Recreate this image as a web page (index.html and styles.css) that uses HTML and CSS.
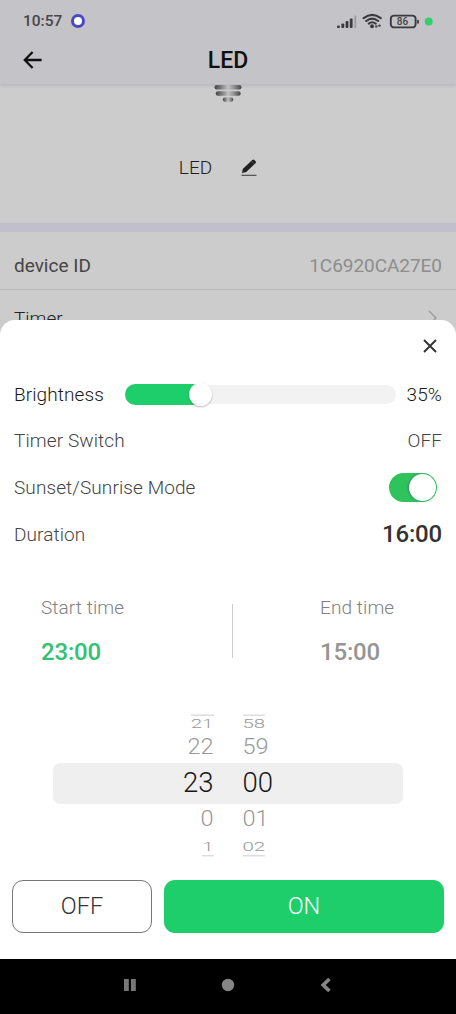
FILE: index.html
```html
<!DOCTYPE html>
<html lang="en">
<head>
<meta charset="utf-8">
<title>LED</title>
<link rel="stylesheet" href="styles.css">
</head>
<body>
<div class="phone">
  <div class="screen">
    <header class="top">
      <div class="status">
        <span class="clock">10:57</span>
        <span class="ring"></span>
        <svg class="indicators" width="98" height="20" viewBox="0 0 98 20">
          <g fill="#3b3b3f">
            <rect x="1" y="14.5" width="2.8" height="2.5" rx=".8"/><rect x="5.4" y="12.5" width="2.8" height="4.5" rx=".8"/><rect x="9.6" y="10" width="2.8" height="7" rx=".8"/><rect x="13.8" y="7.5" width="2.8" height="9.5" rx=".8"/>
            <rect x="18.4" y="4.5" width="1.8" height="12.5" fill="#9b9b9f"/>
            <circle cx="36" cy="15.3" r="2"/><circle cx="40.3" cy="15.4" r="1.2"/><circle cx="43.5" cy="14.6" r="1.2"/>
          </g>
          <g fill="none" stroke="#3b3b3f" stroke-width="2.1" stroke-linecap="round">
            <path d="M27.6 7.2Q36.2.5 44.8 7.2M30.2 10Q36.2 5.4 42.2 10M32.7 12.6Q36.2 9.9 39.7 12.6"/>
            <rect x="54.8" y="4.6" width="24.8" height="11.8" rx="3.2" stroke-width="1.9"/>
          </g>
          <rect x="81" y="8.7" width="2" height="4" rx="1" fill="#5b3b40"/>
          <text x="60.8" y="14.2" class="battery">86</text>
          <circle cx="92.7" cy="10.5" r="4" fill="#2fd06c"/>
        </svg>
      </div>
      <div class="titlebar">
        <svg class="back" width="20" height="20" viewBox="0 0 20 20"><path d="M18.6 10H2M9.6 2L1.8 10l7.8 8" fill="none" stroke="#111" stroke-width="2.3"/></svg>
        <h1>LED</h1>
      </div>
    </header>
    <section class="device">
      <svg class="bulb" width="28" height="18" viewBox="0 0 28 18">
        <defs><linearGradient id="metal"><stop offset="0" stop-color="#454545"/><stop offset=".22" stop-color="#777"/><stop offset=".5" stop-color="#c2c2c2"/><stop offset=".75" stop-color="#8a8a8a"/><stop offset="1" stop-color="#444"/></linearGradient></defs>
        <g fill="url(#metal)"><rect x=".5" y="0" width="27" height="4.6" rx="2.3"/><rect x="1.7" y="6.2" width="25" height="4.6" rx="2.3"/><rect x="8.8" y="12.4" width="10.5" height="4.4" rx="2.2"/></g>
      </svg>
      <div class="name"><span>LED</span>
        <svg width="16" height="18" viewBox="0 0 16 18"><path d="M1 14l.8-4L11.2 1q1-1 2.1 0l1.3 1.3q.8 1-.1 2L5.2 12.9z" fill="#202020"/><path d="M10.1 1.7l3.7 3.8" stroke="#888" stroke-width=".5"/><path d="M.5 16.3h15" stroke="#444" stroke-width="1.1"/></svg>
      </div>
    </section>
    <div class="info"><span>device ID</span><span class="id">1C6920CA27E0</span></div>
    <div class="info timer"><span>Timer</span><svg width="10" height="16" viewBox="0 0 10 16"><path d="M1 1l7 7-7 7" fill="none" stroke="#999" stroke-width="1.3"/></svg></div>
  </div>

  <section class="sheet">
    <div class="close"><svg width="14" height="14" viewBox="0 0 14 14"><path d="M1 1l12 12M13 1L1 13" stroke="#333" stroke-width="1.9"/></svg></div>
    <div class="row dark"><span class="bright">Brightness</span>
      <div class="slider"><div class="fill"><i></i></div></div><span>35%</span></div>
    <div class="row"><span>Timer Switch</span><span>OFF</span></div>
    <div class="row"><span class="mode">Sunset/Sunrise Mode</span><span class="toggle"><i></i></span></div>
    <div class="row"><span>Duration</span><b>16:00</b></div>
    <div class="times">
      <div class="time start"><span>Start time</span><b>23:00</b></div>
      <div class="divider"></div>
      <div class="time end"><span>End time</span><b>15:00</b></div>
    </div>
    <div class="picker">
      <div class="line edge top-edge"><span><i>21</i></span><span><i>58</i></span></div>
      <div class="line near"><span><i>22</i></span><span><i>59</i></span></div>
      <div class="line selected"><span><i>23</i></span><span><i>00</i></span></div>
      <div class="line near below"><span><i>0</i></span><span><i>01</i></span></div>
      <div class="line edge bottom-edge"><span><i>1</i></span><span><i>02</i></span></div>
    </div>
    <div class="actions"><button class="off">OFF</button><button class="on">ON</button></div>
  </section>

  <nav class="nav">
    <svg width="14" height="14" viewBox="0 0 14 14"><path d="M1 1h4.8v12H1zM8 1h4.8v12H8z" fill="#777"/></svg>
    <svg width="14" height="14" viewBox="0 0 14 14"><circle cx="7" cy="7" r="6.2" fill="#858585"/></svg>
    <svg width="14" height="16" viewBox="0 0 14 16"><path d="M10.4 2L4.2 8l6.2 6" fill="none" stroke="#858585" stroke-width="3.6"/></svg>
  </nav>
</div>
</body>
</html>
```
FILE: styles.css
```css
* { box-sizing: border-box; }
body { margin: 0; font-family: Roboto, "Liberation Sans", sans-serif; }
svg { display: block; flex: none; }
i { font-style: normal; }
.phone { position: relative; width: 456px; height: 1014px; display: flex; flex-direction: column; overflow: hidden; background: #fff; }
.screen { height: 959px; background: #ccc; }
.top { height: 85px; background: #c4c3c8; border-bottom: 1px solid #bdbdbf; box-shadow: 0 1px 3px #b7b7b7; }
.status { height: 40px; display: flex; align-items: center; padding: 1px 22px 0 23px; }
.clock { font-size: 15.5px; font-weight: 500; color: #48484c; width: 48px; }
.ring { width: 14px; height: 14px; border: 3px solid #4b48c4; border-radius: 50%; background: #fff; }
.indicators { margin-left: auto; }
.battery { font: 500 10px Roboto, sans-serif; fill: #444; }
.titlebar { display: grid; grid-template-columns: 20px 1fr 20px; align-items: center; height: 40px; padding: 0 23px; }
.titlebar h1 { margin: 0; font-size: 23px; font-weight: 500; text-align: center; color: #111; }
.device { height: 147px; border-bottom: 9px solid #c0bfcb; display: flex; flex-direction: column; align-items: center; }
.name { display: flex; align-items: center; gap: 29px; margin: 53px 0 0 -20px; font-size: 19px; font-weight: 350; line-height: 24px; color: #202020; }
.info { height: 58px; padding: 9px 14px 0; display: flex; justify-content: space-between; align-items: center; border-bottom: 1px solid #b8b8b8; color: #454545; font-size: 19px; }
.info .id { color: #8d8d8d; letter-spacing: -.05px; }
.info.timer { border: 0; padding-top: 0; padding-right: 18px; font-weight: 350; color: #222; height: 56px; }
.sheet { position: absolute; inset: 320px 0 55px; background: #fff; border-radius: 15px 15px 0 0; display: flex; flex-direction: column; }
.close { height: 51px; display: flex; justify-content: flex-end; align-items: center; padding-right: 19px; }
.row { height: 46.6px; display: flex; align-items: center; justify-content: space-between; padding: 0 14px; font-size: 19px; font-weight: 350; color: #444; letter-spacing: .1px; }
.row b { font-weight: 500; font-size: 24px; color: #333; letter-spacing: -.2px; padding-bottom: 1px; }
.row.dark { color: #181818; }
.bright { width: 111px; }
.slider { width: 271px; height: 19px; margin-right: auto; border-radius: 10px; background: #f2f2f2; }
.fill { width: 78px; height: 21px; margin-top: -1px; border-radius: 11px; background: #1dce6a; display: flex; justify-content: flex-end; align-items: center; }
.fill i { flex: none; width: 23px; height: 23px; margin-right: -9px; border-radius: 50%; background: #fff; box-shadow: 0 1px 2px #0004; }
.toggle { width: 48px; height: 29px; border-radius: 15px; background: #2fc45b; display: flex; justify-content: flex-end; align-items: center; padding-right: 1px; margin-right: 5px; }
.toggle i { width: 27px; height: 27px; border-radius: 50%; background: #fff; box-shadow: -1px 0 2px #386; }
.times { height: 119px; display: flex; align-items: center; padding-top: 28px; }
.time { display: flex; flex-direction: column; gap: 19px; font-size: 19px; font-weight: 300; color: #808080; letter-spacing: .1px; }
.time b { font-size: 24px; font-weight: 500; line-height: 28px; color: #959595; letter-spacing: -.2px; }
.start { width: 191px; margin-left: 41px; }
.start b { color: #33c173; }
.divider { width: 1px; height: 54px; margin-right: 87px; background: #ccc; }
.picker { height: 144px; margin-top: 36px; display: flex; flex-direction: column; color: #999; font-weight: 350; }
.line { display: grid; grid-template-columns: 1fr 1fr; column-gap: 29px; margin: 0 53px; }
.line span { display: flex; align-items: center; }
.line span:first-child { justify-content: flex-end; }
.line i { display: block; }
.edge { height: 19px; font-size: 20.5px; line-height: 28px; }
.edge i { border-top: 1px solid #aaa; }
.top-edge i { transform: translateY(-3px) scaleY(.6); }
.near { height: 32px; font-size: 23.5px; }
.near i { transform: scaleY(.9); }
.selected { height: 41px; border-radius: 7px; background: #efefef; color: #181818; font-size: 27.5px; padding-bottom: 2px; }
.below { height: 30px; }
.bottom-edge i { border-top: 0; border-bottom: 1px solid #aaa; transform: translateY(-1px) scaleY(.6); }
.actions { margin-top: auto; padding: 0 12px 26px; display: grid; grid-template-columns: 140px 1fr; gap: 12px; }
.actions button { height: 53px; border-radius: 11px; font: 300 23.5px Roboto, sans-serif; padding: 0 0 2px; }
.off { background: #fff; border: 1px solid #777; color: #333; }
.on { background: #1dce6a; border: 0; color: #fff; }
.nav { height: 55px; background: #000; display: flex; align-items: center; justify-content: center; gap: 84px; padding-bottom: 3px; }
```
